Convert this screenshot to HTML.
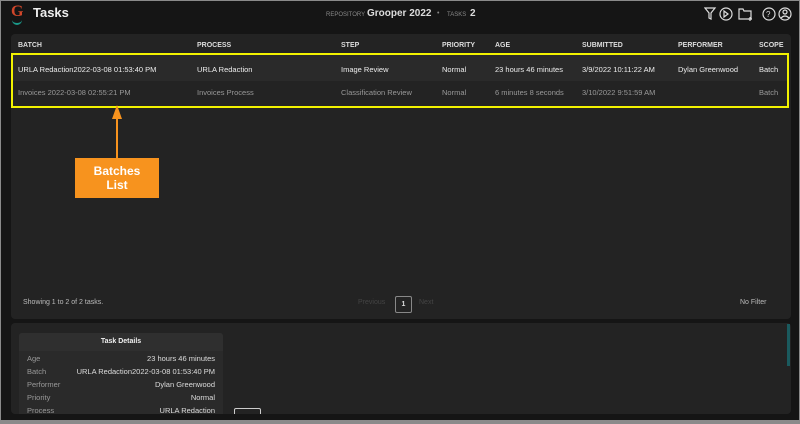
<!DOCTYPE html>
<html><head><style>
body{margin:0;width:800px;height:424px;overflow:hidden;background:#8a8a8a;font-family:"Liberation Sans",sans-serif;}
#f{position:absolute;left:1px;top:1px;width:798px;height:419px;background:#151515;overflow:hidden}
.a{position:absolute;white-space:nowrap}
.h{font-size:7px;font-weight:bold;color:#ddd;top:41px}
.r1{font-size:7.5px;color:#eee;top:64px}
.r2{font-size:7.5px;color:#999;top:87px}
.d{font-size:7.5px;color:#999}
.dv{font-size:7.5px;color:#ddd;right:0}
</style></head><body><div id="f">
<div class="a" style="left:10px;top:2px;font:bold 16px 'Liberation Serif',serif;color:#d0462a">G</div>
<div class="a" style="left:11px;top:19px;width:10px;height:3px;border-bottom:2px solid #1a9a8a;border-radius:0 0 6px 6px"></div>
<div class="a" style="left:32px;top:4px;font-size:13px;font-weight:bold;color:#eee">Tasks</div>
<div class="a" style="left:325px;top:11px;font-size:6px;color:#888">REPOSITORY</div>
<div class="a" style="left:366px;top:7px;font-size:10px;font-weight:bold;color:#ddd">Grooper 2022</div>
<div class="a" style="left:436px;top:9px;font-size:7px;color:#888">•</div>
<div class="a" style="left:446px;top:11px;font-size:6px;color:#888">TASKS</div>
<div class="a" style="left:469px;top:7px;font-size:10px;font-weight:bold;color:#ddd">2</div>
<svg class="a" style="left:703px;top:5px" width="95" height="16" fill="none" stroke="#ddd" stroke-width="1.2">
<path d="M1 2h10l-4 5v6l-2-1v-5z"/><circle cx="22" cy="8" r="6"/><path d="M20 5v6l4-3z"/>
<path d="M35 3h4l1 2h7v8h-12z"/><path d="M46 11v4M44 13h4"/>
<circle cx="65" cy="8" r="6"/><text x="62" y="11" font-size="8" fill="#ddd" stroke="none">?</text>
<circle cx="81" cy="8" r="6"/><circle cx="81" cy="6" r="2"/><path d="M77 12q4-4 8 0"/></svg>
<div class="a" style="left:10px;top:33px;width:780px;height:285px;background:#232323;border-radius:4px"></div>
<div class="a" style="left:10px;top:53px;width:778px;height:27px;background:#2a2a2a"></div>
<div class="a" style="left:10px;top:52px;width:774px;height:51px;border:2px solid #f2f200"></div>
<div class="a h" style="left:17px">BATCH</div><div class="a h" style="left:196px">PROCESS</div><div class="a h" style="left:340px">STEP</div><div class="a h" style="left:441px">PRIORITY</div><div class="a h" style="left:494px">AGE</div><div class="a h" style="left:581px">SUBMITTED</div><div class="a h" style="left:677px">PERFORMER</div><div class="a h" style="left:758px">SCOPE</div>
<div class="a r1" style="left:17px">URLA Redaction2022-03-08 01:53:40 PM</div><div class="a r1" style="left:196px">URLA Redaction</div><div class="a r1" style="left:340px">Image Review</div><div class="a r1" style="left:441px">Normal</div><div class="a r1" style="left:494px">23 hours 46 minutes</div><div class="a r1" style="left:581px">3/9/2022 10:11:22 AM</div><div class="a r1" style="left:677px">Dylan Greenwood</div><div class="a r1" style="left:758px">Batch</div>
<div class="a r2" style="left:17px">Invoices 2022-03-08 02:55:21 PM</div><div class="a r2" style="left:196px">Invoices Process</div><div class="a r2" style="left:340px">Classification Review</div><div class="a r2" style="left:441px">Normal</div><div class="a r2" style="left:494px">6 minutes 8 seconds</div><div class="a r2" style="left:581px">3/10/2022 9:51:59 AM</div><div class="a r2" style="left:758px">Batch</div>
<svg class="a" style="left:108px;top:104px" width="16" height="56"><path d="M8 0L13 14H3z" fill="#f7931e"/><rect x="7" y="12" width="2" height="44" fill="#f7931e"/></svg>
<div class="a" style="left:74px;top:157px;width:84px;height:40px;background:#f7931e;color:#fff;font-weight:bold;font-size:12px;text-align:center;line-height:14px;padding-top:6px;box-sizing:border-box">Batches<br>List</div>
<div class="a" style="left:22px;top:298px;font-size:7px;color:#bbb">Showing 1 to 2 of 2 tasks.</div>
<div class="a" style="left:357px;top:298px;font-size:7px;color:#444">Previous</div>
<div class="a" style="left:394px;top:295px;width:15px;height:15px;border:1px solid #888;border-radius:2px;color:#ddd;font-size:7px;font-weight:bold;text-align:center;line-height:15px">1</div>
<div class="a" style="left:418px;top:298px;font-size:7px;color:#444">Next</div>
<div class="a" style="left:739px;top:298px;font-size:7px;color:#bbb">No Filter</div>
<div class="a" style="left:10px;top:322px;width:780px;height:91px;background:#232323;border-radius:4px"></div>
<div class="a" style="left:786px;top:323px;width:3px;height:42px;background:#1a5a5e"></div>
<div class="a" style="left:18px;top:332px;width:204px;height:85px;background:#2a2a2a;border-radius:3px;overflow:hidden">
<div style="height:18px;background:#2f2f2f;color:#eee;font-size:7px;font-weight:bold;text-align:center;line-height:18px">Task Details</div>
<div style="position:relative;margin:0 8px">
<div class="a d" style="top:3px;left:0">Age</div><div class="a dv" style="top:3px">23 hours 46 minutes</div>
<div class="a d" style="top:16px;left:0">Batch</div><div class="a dv" style="top:16px">URLA Redaction2022-03-08 01:53:40 PM</div>
<div class="a d" style="top:29px;left:0">Performer</div><div class="a dv" style="top:29px">Dylan Greenwood</div>
<div class="a d" style="top:42px;left:0">Priority</div><div class="a dv" style="top:42px">Normal</div>
<div class="a d" style="top:55px;left:0">Process</div><div class="a dv" style="top:55px">URLA Redaction</div>
</div></div>
<div class="a" style="left:233px;top:407px;width:25px;height:12px;border:1px solid #ccc;border-radius:2px"></div>
<div class="a" style="left:0;top:413px;width:798px;height:6px;background:#151515"></div>
</div></body></html>
